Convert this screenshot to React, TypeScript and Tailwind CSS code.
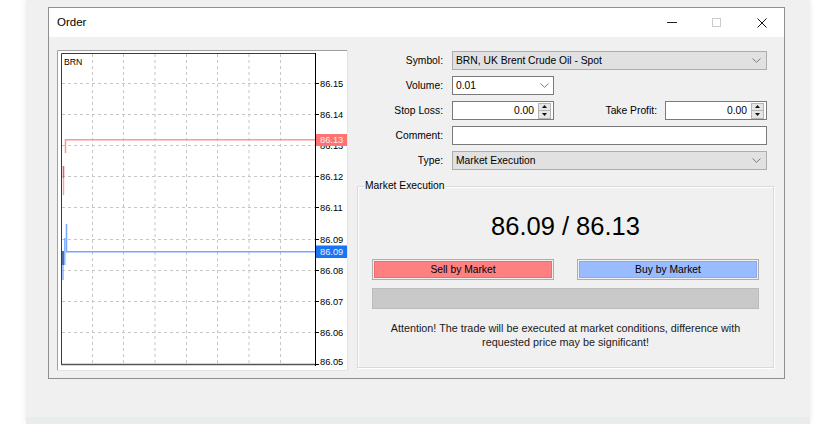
import React from "react";

const gridX = [35.5, 66.5, 98, 129.5, 160.5, 192, 223.5];
const levels = [
  { y: 33.5, t: "86.15" },
  { y: 64.5, t: "86.14" },
  { y: 95.5, t: "86.13" },
  { y: 126.5, t: "86.12" },
  { y: 157.5, t: "86.11" },
  { y: 189.5, t: "86.09" },
  { y: 220.5, t: "86.08" },
  { y: 251.5, t: "86.07" },
  { y: 282.5, t: "86.06" },
];

function Chart() {
  return (
    <svg width="291" height="321" viewBox="0 0 291 321" className="block shrink-0">
      <rect x="0" y="0" width="291" height="321" fill="#fff" />
      <path d="M0.5 321 V0.5 H291" stroke="#a0a0a0" fill="none" />
      <path d="M0 320.5 H290.5 V0" stroke="#e2e2e2" fill="none" />
      {/* grid */}
      {gridX.map((x) => (
        <line key={x} x1={x} y1="4" x2={x} y2="314" stroke="#c6c6c6" strokeDasharray="3 3" />
      ))}
      {levels.map((l) => (
        <line key={l.t + l.y} x1="5" y1={l.y} x2="258" y2={l.y} stroke="#c6c6c6" strokeDasharray="3 3" />
      ))}
      {/* frame */}
      <path d="M4.5 314.5 V3.5 H258.5" stroke="#3a3a3a" fill="none" />
      <line x1="4" y1="314.5" x2="259" y2="314.5" stroke="#555" strokeWidth="1.6" />
      <line x1="258.5" y1="3" x2="258.5" y2="316" stroke="#000" />
      {/* ticks + labels */}
      {levels.map((l) => (
        <g key={"t" + l.t + l.y}>
          <line x1="259" y1={l.y} x2="262" y2={l.y} stroke="#000" />
          <text x="263" y={l.y + 3.4} fontSize="9.3" fill="#000" fontFamily="Liberation Sans, Arial, sans-serif">
            {l.t}
          </text>
        </g>
      ))}
      <line x1="259" y1="314.5" x2="262" y2="314.5" stroke="#000" />
      <text x="263" y="315" fontSize="9.3" fill="#000" fontFamily="Liberation Sans, Arial, sans-serif">
        86.05
      </text>
      <text x="7" y="14.5" fontSize="8.7" fill="#000" fontFamily="Liberation Sans, Arial, sans-serif">
        BRN
      </text>
      {/* ask line */}
      <path d="M8.5 103 V89.7 H258" stroke="#ff9494" strokeWidth="1.5" fill="none" />
      <line x1="6.5" y1="116" x2="6.5" y2="145" stroke="#ffa0a0" strokeWidth="1.4" />
      <line x1="6.5" y1="116" x2="6.5" y2="128" stroke="#d46a6a" strokeWidth="1.4" />
      <rect x="259" y="84" width="31" height="12" fill="#ff7373" />
      <text x="263" y="93.3" fontSize="9.3" fill="#ffe9e9" fontFamily="Liberation Sans, Arial, sans-serif">
        86.13
      </text>
      {/* bid line */}
      <path d="M9.5 174 V201.7 H258" stroke="#76a6ff" strokeWidth="1.5" fill="none" />
      <line x1="7.8" y1="188" x2="7.8" y2="215" stroke="#76a6ff" strokeWidth="1.3" />
      <line x1="6" y1="201" x2="6" y2="230" stroke="#76a6ff" strokeWidth="1.3" />
      <line x1="6" y1="201" x2="6" y2="215" stroke="#1f3f80" strokeWidth="1.3" />
      <rect x="259" y="195.5" width="31" height="12.5" fill="#1a73f2" />
      <text x="263" y="205" fontSize="9.3" fill="#e8f0ff" fontFamily="Liberation Sans, Arial, sans-serif">
        86.09
      </text>
    </svg>
  );
}

function Chevron() {
  return (
    <svg width="9" height="5" viewBox="0 0 9 5" className="shrink-0">
      <path d="M0.5 0.5 L4.5 4.3 L8.5 0.5" stroke="#7c7c7c" fill="none" strokeWidth="1" />
    </svg>
  );
}

function Spinner() {
  return (
    <div className="flex flex-col w-[13px] h-[16px] border border-[#b4b4b4] bg-[#e6e6e6] shrink-0">
      <div className="flex-1 flex items-center justify-center border-b border-[#b4b4b4]">
        <svg width="5" height="3" viewBox="0 0 5 3">
          <path d="M0 3 L2.5 0 L5 3Z" fill="#111" />
        </svg>
      </div>
      <div className="flex-1 flex items-center justify-center">
        <svg width="5" height="3" viewBox="0 0 5 3">
          <path d="M0 0 L5 0 L2.5 3Z" fill="#111" />
        </svg>
      </div>
    </div>
  );
}

function SpinField() {
  return (
    <div className="w-[102px] h-[19px] border border-[#7a7a7a] bg-white flex items-center justify-end pr-[2px]">
      <span className="mr-[4px]">0.00</span>
      <Spinner />
    </div>
  );
}

const Label = ({ children }: { children: React.ReactNode }) => (
  <div className="w-[86px] text-right shrink-0">{children}</div>
);

export default function App() {
  return (
    <div className="w-[836px] h-[424px] bg-white overflow-hidden font-['Liberation_Sans',Arial,sans-serif] text-black">
      <div className="ml-[26px] w-[784px] h-full bg-[#f0f0f0] shadow-[0_0_6px_rgba(0,0,0,0.09)] flex flex-col">
        {/* Dialog window */}
        <div className="ml-[22px] mt-[7px] w-[737px] h-[372px] border border-[#8f8f8f] flex flex-col">
          {/* Title bar */}
          <div className="h-[29px] bg-white flex items-center">
            <span className="pl-[8px] text-[11.5px]">Order</span>
            <div className="ml-auto flex h-full">
              <div className="w-[45px] flex items-center justify-center">
                <div className="w-[10px] h-px bg-[#222]" />
              </div>
              <div className="w-[45px] flex items-center justify-center">
                <div className="w-[9px] h-[9px] border border-[#cccccc]" />
              </div>
              <div className="w-[45px] flex items-center justify-center">
                <svg width="10" height="10" viewBox="0 0 10 10">
                  <path d="M0.5 0.5 L9.5 9.5 M9.5 0.5 L0.5 9.5" stroke="#111" strokeWidth="1" />
                </svg>
              </div>
            </div>
          </div>

          {/* Body */}
          <div className="flex-1 flex pl-[8px] pt-[13px] text-[10.3px]">
            <Chart />

            <div className="ml-[9px] w-[417px] flex flex-col pt-[1px]">
              {/* form */}
              <div className="flex flex-col gap-[6px] pr-[7px]">
                <div className="flex items-center h-[19px]">
                  <Label>Symbol:</Label>
                  <div className="ml-[9px] flex-1 h-full border border-[#adadad] bg-[#e1e1e1] flex items-center justify-between pl-[3px] pr-[5px]">
                    <span>BRN, UK Brent Crude Oil - Spot</span>
                    <Chevron />
                  </div>
                </div>
                <div className="flex items-center h-[19px]">
                  <Label>Volume:</Label>
                  <div className="ml-[9px] w-[102px] h-full border border-[#7a7a7a] bg-white flex items-center justify-between pl-[3px] pr-[4px]">
                    <span>0.01</span>
                    <Chevron />
                  </div>
                </div>
                <div className="flex items-center h-[19px]">
                  <Label>Stop Loss:</Label>
                  <div className="ml-[9px]">
                    <SpinField />
                  </div>
                  <div className="flex-1 text-right mr-[8px]">Take Profit:</div>
                  <SpinField />
                </div>
                <div className="flex items-center h-[19px]">
                  <Label>Comment:</Label>
                  <div className="ml-[9px] flex-1 h-full border border-[#7a7a7a] bg-white" />
                </div>
                <div className="flex items-center h-[19px]">
                  <Label>Type:</Label>
                  <div className="ml-[9px] flex-1 h-full border border-[#adadad] bg-[#e1e1e1] flex items-center justify-between pl-[3px] pr-[5px]">
                    <span>Market Execution</span>
                    <Chevron />
                  </div>
                </div>
              </div>

              {/* group box */}
              <div className="relative mt-[16px] h-[182px] border border-[#d9d9d9] shadow-[1px_1px_0_#fff,inset_1px_1px_0_#fff] flex flex-col px-[14px]">
                <span className="absolute -top-[7px] left-[6px] px-[1px] bg-[#f0f0f0] leading-[12px]">
                  Market Execution
                </span>
                <div className="mt-[25px] h-[30px] flex items-center justify-center text-[25.5px] leading-none">
                  86.09 / 86.13
                </div>
                <div className="mt-[17px] flex justify-between">
                  <div className="w-[182px] h-[21px] border border-[#adadad] p-px">
                    <div className="w-full h-full bg-[#ff8080] border border-[#f06c6c] flex items-center justify-center">
                      Sell by Market
                    </div>
                  </div>
                  <div className="w-[182px] h-[21px] border border-[#adadad] p-px">
                    <div className="w-full h-full bg-[#99bbff] border border-[#88aaf0] flex items-center justify-center">
                      Buy by Market
                    </div>
                  </div>
                </div>
                <div className="mt-[8px] h-[21px] bg-[#c9c9c9] border border-[#bcbcbc]" />
                <div className="mt-[12px] text-center text-[10.8px] leading-[14px] text-[#1a1a1a]">
                  Attention! The trade will be executed at market conditions, difference with
                  <br />
                  requested price may be significant!
                </div>
              </div>
            </div>
          </div>
        </div>
        <div className="mt-auto h-[7px] bg-[#e9ecec]" />
      </div>
    </div>
  );
}
